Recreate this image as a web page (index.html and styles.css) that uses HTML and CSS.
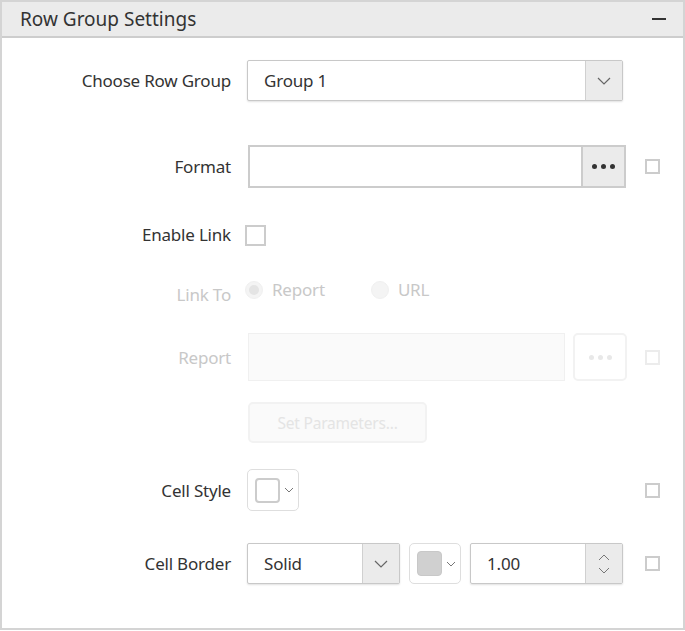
FILE: index.html
```html
<!DOCTYPE html>
<html>
<head>
<meta charset="utf-8">
<link rel="stylesheet" href="styles.css">
</head>
<body>
<div class="panel">
  <div class="header">
    <span class="title">Row Group Settings</span>
    <span class="collapse"></span>
  </div>
  <div class="body">
    <div class="row r1">
      <label class="lbl">Choose Row Group</label>
      <div class="select wide">
        <span class="select-text">Group 1</span>
        <span class="select-btn"><svg width="14" height="8" viewBox="0 0 14 8"><path d="M1 1l6 6 6-6" fill="none" stroke="#666" stroke-width="1.2"/></svg></span>
      </div>
    </div>

    <div class="row r2">
      <label class="lbl">Format</label>
      <div class="fmt">
        <span class="fmt-input"></span>
        <span class="fmt-btn"><i></i><i></i><i></i></span>
      </div>
      <span class="chk"></span>
    </div>

    <div class="row r3">
      <label class="lbl">Enable Link</label>
      <div><span class="chk big"></span></div>
    </div>

    <div class="row r4">
      <label class="lbl dis">Link To</label>
      <div class="radios">
        <span class="radio on"></span><span class="rtext">Report</span>
        <span class="radio second"></span><span class="rtext">URL</span>
      </div>
    </div>

    <div class="row r5">
      <label class="lbl dis">Report</label>
      <div class="rep">
        <span class="rep-input"></span>
        <span class="rep-btn"><i></i><i></i><i></i></span>
      </div>
      <span class="chk dim"></span>
    </div>

    <div class="row r6">
      <span></span>
      <div><span class="params">Set Parameters...</span></div>
    </div>

    <div class="row r7">
      <label class="lbl">Cell Style</label>
      <div><span class="style-btn"><span class="sw white"></span><svg width="10" height="6" viewBox="0 0 10 6"><path d="M1 1l4 4 4-4" fill="none" stroke="#777" stroke-width="1"/></svg></span></div>
      <span class="chk"></span>
    </div>

    <div class="row r8">
      <label class="lbl">Cell Border</label>
      <div class="border-ctrls">
        <div class="select solid">
          <span class="select-text">Solid</span>
          <span class="select-btn"><svg width="14" height="8" viewBox="0 0 14 8"><path d="M1 1l6 6 6-6" fill="none" stroke="#666" stroke-width="1.2"/></svg></span>
        </div>
        <span class="style-btn color"><span class="sw gray"></span><svg width="10" height="6" viewBox="0 0 10 6"><path d="M1 1l4 4 4-4" fill="none" stroke="#777" stroke-width="1"/></svg></span>
        <div class="num">
          <span class="select-text">1.00</span>
          <span class="spin">
            <svg width="12" height="7" viewBox="0 0 12 7"><path d="M1 6l5-5 5 5" fill="none" stroke="#777" stroke-width="1"/></svg>
            <svg width="12" height="7" viewBox="0 0 12 7"><path d="M1 1l5 5 5-5" fill="none" stroke="#777" stroke-width="1"/></svg>
          </span>
        </div>
      </div>
      <span class="chk"></span>
    </div>
  </div>
</div>
</body>
</html>
```

FILE: styles.css
```css
* { box-sizing: border-box; }
html, body { margin: 0; padding: 0; background: #fff; }
body {
  font-family: "Noto Sans", "Open Sans", sans-serif;
  color: #333;
  width: 685px;
  height: 631px;
  overflow: hidden;
}
.panel {
  width: 685px;
  height: 630px;
  border: 2px solid #d4d4d4;
}
.header {
  height: 36px;
  background: #ebebeb;
  border-bottom: 2px solid #cdcdcd;
  display: flex;
  align-items: center;
  justify-content: space-between;
  padding: 0 17px 0 18px;
}
.title {
  font-size: 19px;
  letter-spacing: 0;
  color: #333;
}
.collapse {
  width: 14px;
  height: 2px;
  background: #333;
}
.body {
  display: flex;
  flex-direction: column;
}
.row {
  display: grid;
  grid-template-columns: 229px 380px auto;
  grid-template-rows: 100%;
  column-gap: 16px;
  align-items: center;
}
.r1 { margin-top: 22px; height: 41px; }
.r2 { margin-top: 44px; height: 43px; }
.r3 { margin-top: 37px; height: 21px; }
.r4 { margin-top: 35px; height: 18px; }
.r5 { margin-top: 34px; height: 48px; }
.r6 { margin-top: 21px; height: 41px; }
.r7 { margin-top: 26px; height: 42px; }
.r8 { margin-top: 32px; height: 41px; }

.lbl {
  text-align: right;
  font-size: 17px;
  color: #333;
  letter-spacing: -0.2px;
}
.lbl.dis { color: #c8c8c8; }
.r3 .lbl { margin-top: -3px; }
.r4 .lbl { margin-top: 8px; }

.select {
  display: flex;
  height: 41px;
  border: 1px solid #c8c8c8;
  border-radius: 2px;
  background: #fff;
  box-shadow: 0 1px 2px rgba(0,0,0,0.12);
}
.select.wide { width: 376px; }
.select-text {
  flex: 1;
  display: flex;
  align-items: center;
  padding-left: 16px;
  font-size: 17px;
  letter-spacing: -0.2px;
  color: #333;
}
.select-btn {
  width: 37px;
  background: #ebebeb;
  border-left: 1px solid #d0d0d0;
  display: flex;
  align-items: center;
  justify-content: center;
}

.fmt {
  display: flex;
  width: 378px;
  height: 43px;
  margin-left: 1px;
}
.fmt-input {
  flex: 1;
  border: 2px solid #cccccc;
  border-right: none;
  background: #fff;
}
.fmt-btn {
  width: 45px;
  border: 2px solid #cccccc;
  background: #ebebeb;
  display: flex;
  align-items: center;
  justify-content: center;
  gap: 4px;
}
.fmt-btn i {
  width: 5px;
  height: 5px;
  border-radius: 50%;
  background: #333;
}

.chk {
  display: block;
  width: 15px;
  height: 15px;
  border: 2px solid #cccccc;
  margin-left: 2px;
}
.chk.big {
  width: 21px;
  height: 21px;
  margin-left: -2px;
}
.chk.dim { border-color: #ececec; }

.radios {
  display: flex;
  align-items: center;
  height: 18px;
  margin-left: -2px;
}
.radio {
  width: 18px;
  height: 18px;
  border-radius: 50%;
  background: #f4f4f4;
  border: 1px solid #f0f0f0;
  position: relative;
}
.radio.on::after {
  content: "";
  position: absolute;
  left: 3px;
  top: 3px;
  width: 10px;
  height: 10px;
  border-radius: 50%;
  background: #e4e4e4;
}
.radio.second { margin-left: 46px; }
.rtext {
  margin-left: 9px;
  font-size: 17px;
  line-height: 18px;
  letter-spacing: -0.2px;
  color: #c8c8c8;
}

.rep {
  display: flex;
  height: 48px;
  margin-left: 1px;
  gap: 8px;
}
.rep-input {
  width: 318px;
  border: 1px solid #f0f0f0;
  background: #fafafa;
}
.rep-btn {
  width: 54px;
  border: 2px solid #f2f2f2;
  border-radius: 5px;
  background: #fff;
  display: flex;
  align-items: center;
  justify-content: center;
  gap: 4px;
}
.rep-btn i {
  width: 5px;
  height: 5px;
  border-radius: 50%;
  background: #e8e8e8;
}

.params {
  display: flex;
  align-items: center;
  justify-content: center;
  width: 179px;
  height: 41px;
  margin-left: 1px;
  border: 2px solid #f2f2f2;
  border-radius: 5px;
  background: #fafafa;
  color: #e4e4e4;
  font-size: 15.5px;
  letter-spacing: -0.2px;
}

.style-btn {
  display: flex;
  align-items: center;
  gap: 4px;
  width: 52px;
  height: 42px;
  border: 1px solid #dedede;
  border-radius: 5px;
  padding-left: 7px;
  background: #fff;
}
.sw {
  width: 25px;
  height: 25px;
  border-radius: 4px;
}
.sw.white { border: 2px solid #cccccc; background: #fff; }
.sw.gray { background: #d0d0d0; border: 1px solid #c8c8c8; }

.border-ctrls {
  display: flex;
  align-items: center;
  gap: 9px;
}
.select.solid { width: 153px; }
.style-btn.color { height: 41px; width: 52px; }
.num {
  display: flex;
  width: 153px;
  height: 41px;
  border: 1px solid #c8c8c8;
  border-radius: 2px;
  box-shadow: 0 1px 2px rgba(0,0,0,0.12);
}
.spin {
  width: 37px;
  background: #ebebeb;
  border-left: 1px solid #d0d0d0;
  display: flex;
  flex-direction: column;
  align-items: center;
  justify-content: center;
  gap: 6px;
}
```
